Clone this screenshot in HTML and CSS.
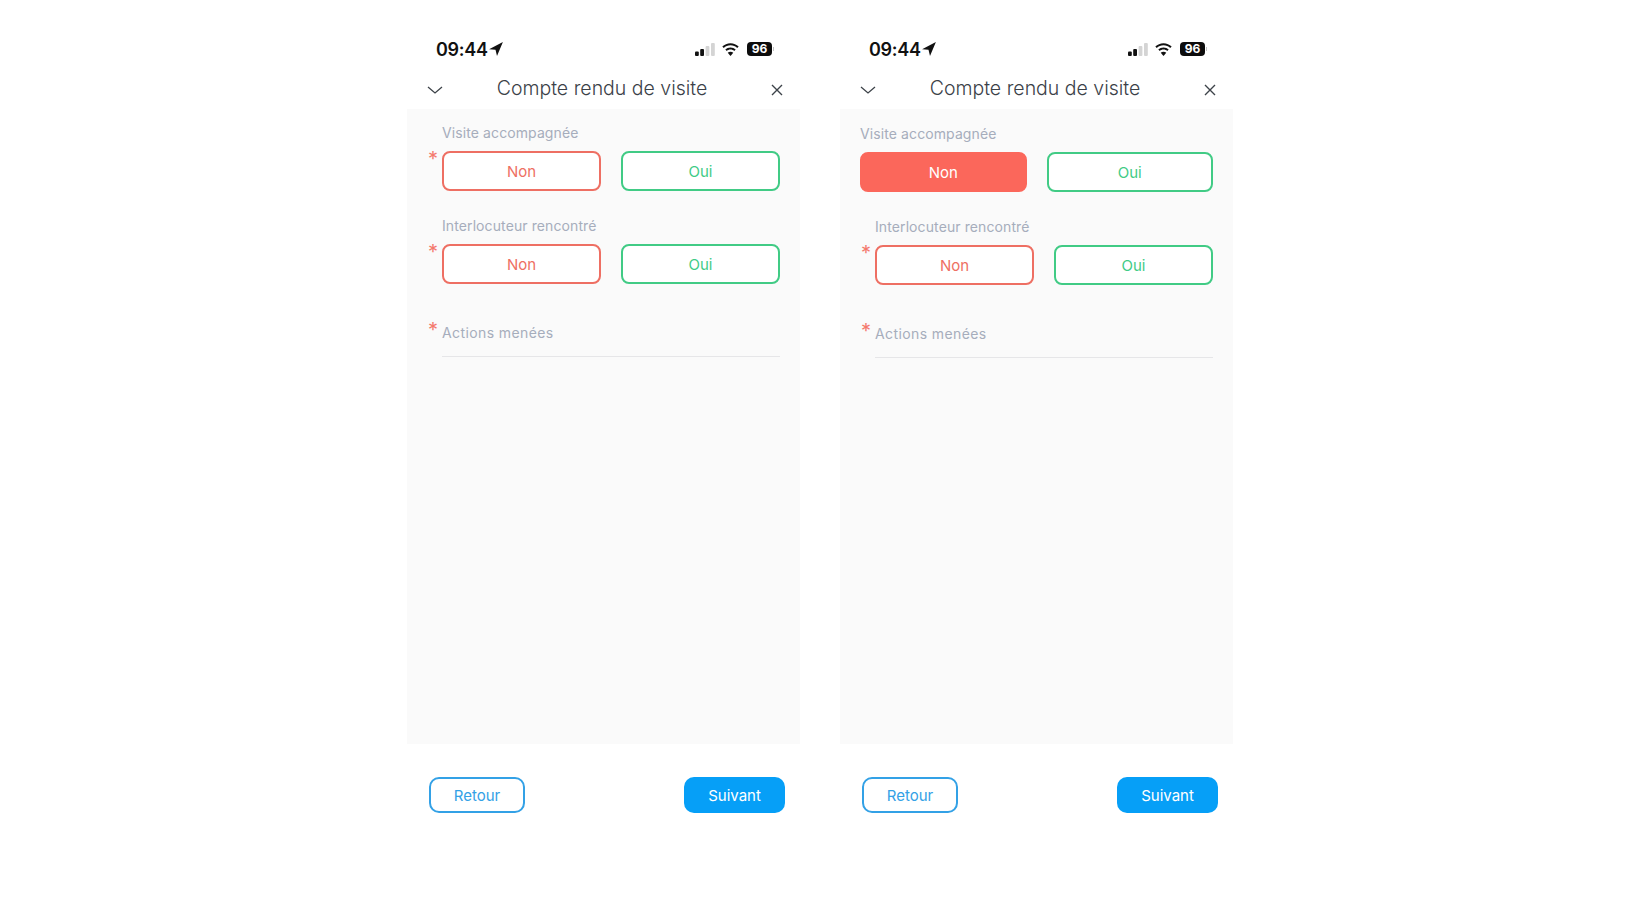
FILE: index.html
```html
<!DOCTYPE html>
<html lang="fr">
<head>
  <meta charset="UTF-8">
  <meta name="viewport" content="width=device-width, initial-scale=1.0">
  <title>Compte rendu de visite</title>
  <link rel="stylesheet" href="styles.css">
</head>
<body>
  <svg class="sprites" width="0" height="0" aria-hidden="true">
    <symbol id="i-arrow" viewBox="0 0 14 14"><path d="M13.9.1 8 13.9 6.500 7.700.1 7.200Z"/></symbol>
    <symbol id="i-signal" viewBox="0 0 20 13">
      <rect x="0" y="8.500" width="3.800" height="4.500" rx="1"/>
      <rect x="5.200" y="6" width="3.800" height="7" rx="1"/>
      <rect class="off" x="10.600" y="3" width="3.800" height="10" rx="1"/>
      <rect class="off" x="16" y="0" width="3.800" height="13" rx="1"/>
    </symbol>
    <symbol id="i-wifi" viewBox="0 0 16 12">
      <path d="M8 0C5 0 2.300 1.200.3 3.100l1.400 1.500C3.300 3 5.500 2 8 2s4.700 1 6.300 2.600l1.400-1.500C13.700 1.200 11 0 8 0Z"/>
      <path d="M8 4C6.100 4 4.400 4.800 3.100 6l1.400 1.500C5.400 6.600 6.600 6.100 8 6.100s2.600.5 3.500 1.400L12.900 6C11.600 4.800 9.900 4 8 4Z"/>
      <path d="M8 8.100c-1 0-1.900.4-2.600 1L8 12l2.600-2.900c-.7-.6-1.600-1-2.600-1Z"/>
    </symbol>
  </svg>

  <section class="phone">
    <div class="status">
      <span class="time">09:44</span>
      <svg class="loc"><use href="#i-arrow"/></svg>
      <span class="status-right">
        <svg class="signal"><use href="#i-signal"/></svg>
        <svg class="wifi"><use href="#i-wifi"/></svg>
        <span class="battery">96</span>
        <span class="battery-nub"></span>
      </span>
    </div>
    <header class="head">
      <svg class="chevron" viewBox="0 0 16 8"><path d="M1 1l7 6 7-6"/></svg>
      <h1>Compte rendu de visite</h1>
      <svg class="close" viewBox="0 0 12 12"><path d="M1 1l10 10M11 1L1 11"/></svg>
    </header>
    <main class="panel">
      <div class="field">
        <span class="label">Visite accompagnée</span>
        <span class="req">*</span>
        <div class="choices">
          <button class="btn no">Non</button>
          <button class="btn yes">Oui</button>
        </div>
      </div>
      <div class="field">
        <span class="label">Interlocuteur rencontré</span>
        <span class="req">*</span>
        <div class="choices">
          <button class="btn no">Non</button>
          <button class="btn yes">Oui</button>
        </div>
      </div>
      <div class="field input">
        <span class="req">*</span>
        <span class="label">Actions menées</span>
      </div>
    </main>
    <footer class="foot">
      <button class="nav back">Retour</button>
      <button class="nav next">Suivant</button>
    </footer>
  </section>

  <section class="phone answered">
    <div class="status">
      <span class="time">09:44</span>
      <svg class="loc"><use href="#i-arrow"/></svg>
      <span class="status-right">
        <svg class="signal"><use href="#i-signal"/></svg>
        <svg class="wifi"><use href="#i-wifi"/></svg>
        <span class="battery">96</span>
        <span class="battery-nub"></span>
      </span>
    </div>
    <header class="head">
      <svg class="chevron" viewBox="0 0 16 8"><path d="M1 1l7 6 7-6"/></svg>
      <h1>Compte rendu de visite</h1>
      <svg class="close" viewBox="0 0 12 12"><path d="M1 1l10 10M11 1L1 11"/></svg>
    </header>
    <main class="panel">
      <div class="field done">
        <span class="label">Visite accompagnée</span>
        <div class="choices">
          <button class="btn no selected">Non</button>
          <button class="btn yes">Oui</button>
        </div>
      </div>
      <div class="field">
        <span class="label">Interlocuteur rencontré</span>
        <span class="req">*</span>
        <div class="choices">
          <button class="btn no">Non</button>
          <button class="btn yes">Oui</button>
        </div>
      </div>
      <div class="field input">
        <span class="req">*</span>
        <span class="label">Actions menées</span>
      </div>
    </main>
    <footer class="foot">
      <button class="nav back">Retour</button>
      <button class="nav next">Suivant</button>
    </footer>
  </section>
</body>
</html>
```

FILE: styles.css
```css
body {
  margin: 0;
  height: 901px;
  overflow: hidden;
  background-color: #fff;
  display: flex;
  justify-content: center;
  gap: 40px;
  font-family: 'Inter', 'Liberation Sans', sans-serif;
  font-weight: 300;
}
.sprites {
  position: absolute;
}
.phone {
  width: 393px;
  padding-top: 36px;
}

/* status bar */
.status {
  height: 26px;
  padding: 0 29px;
  display: flex;
  align-items: center;
}
.time {
  font-size: 18px;
  font-weight: 600;
  color: #111;
  letter-spacing: -0.3px;
}
.loc {
  width: 14px;
  height: 14px;
  margin-left: 1px;
  fill: #111;
}
.status-right {
  margin-left: auto;
  margin-right: -3px;
  display: flex;
  align-items: center;
}
.signal {
  width: 20px;
  height: 13px;
  fill: #111;
}
.off {
  fill: #d4d4d4;
}
.wifi {
  width: 17px;
  height: 13px;
  margin-left: 7px;
  fill: #111;
}
.battery {
  width: 25px;
  height: 14px;
  margin-left: 8px;
  background-color: #0c0c0c;
  border-radius: 4px;
  color: #fff;
  font-size: 12px;
  font-weight: 700;
  line-height: 14px;
  text-align: center;
}
.battery-nub {
  width: 1px;
  height: 4px;
  margin-left: 1px;
  background-color: #c4c4c4;
}

/* title bar */
.head {
  height: 47px;
  padding: 0 17px 0 20px;
  display: flex;
  align-items: center;
  justify-content: space-between;
}
.head h1 {
  margin: 4px 10px 0 0;
  font-size: 19.5px;
  font-weight: 300;
  color: #3b4148;
}
.chevron {
  width: 16px;
  height: 8px;
  margin-top: 8px;
  fill: none;
  stroke: #3d4349;
  stroke-width: 1.3;
}
.close {
  width: 12px;
  height: 12px;
  margin-top: 8px;
  fill: none;
  stroke: #3d4349;
  stroke-width: 1.4;
}

/* form */
.panel {
  height: 635px;
  box-sizing: border-box;
  padding: 14px 20px 0;
  background-color: #fafafa;
}
.answered .panel {
  padding-top: 15px;
}
.field {
  display: grid;
  grid-template-columns: 15px 1fr;
  margin-bottom: 25px;
}
.field.done {
  grid-template-columns: 1fr;
}
.label {
  grid-column: 2;
  height: 20px;
  margin-bottom: 8px;
  font-size: 14px;
  font-weight: 400;
  line-height: 20px;
  color: #a6adbc;
  letter-spacing: 0.1px;
}
.field.done .label {
  grid-column: 1;
}
.req {
  grid-column: 1;
  margin-top: -2px;
  padding-left: 1px;
  font-size: 20px;
  font-weight: 400;
  line-height: 20px;
  color: #f4786d;
}
.choices {
  display: grid;
  grid-template-columns: 1fr 1fr;
  gap: 20px;
}
.btn {
  height: 40px;
  padding: 0;
  background-color: #fff;
  border: 2px solid;
  border-radius: 8px;
  font-family: inherit;
  font-size: 15px;
  font-weight: 400;
}
.no {
  border-color: #ee6f63;
  color: #ee6f63;
}
.yes {
  border-color: #41cb85;
  color: #41cb85;
}
.no.selected {
  background-color: #fb675b;
  border-color: #fb675b;
  color: #fff;
}
.field.input {
  margin-top: 39px;
  padding-bottom: 14px;
  background: linear-gradient(#e6e6e8, #e6e6e8) 15px 100% / calc(100% - 15px) 1px no-repeat;
}
.field.input .label {
  margin: 0;
  letter-spacing: 0.4px;
}
.field.input .req {
  margin-top: -3px;
}

/* bottom buttons */
.foot {
  padding: 33px 15px 0 22px;
  display: flex;
  justify-content: space-between;
}
.nav {
  height: 36px;
  padding: 0;
  border-radius: 10px;
  font-family: inherit;
  font-size: 15px;
  font-weight: 400;
}
.back {
  width: 96px;
  background-color: #fff;
  border: 2px solid #33a1e6;
  color: #33a1e6;
}
.next {
  width: 101px;
  background-color: #069ff7;
  border: none;
  color: #fff;
}
```
